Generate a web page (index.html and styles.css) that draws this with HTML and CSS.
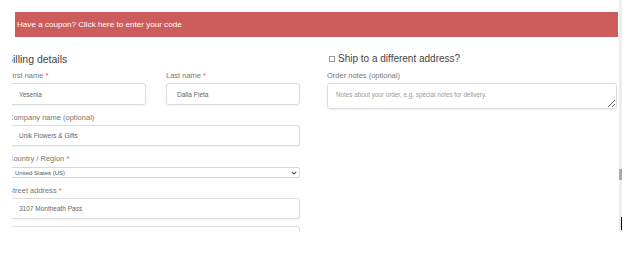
FILE: index.html
```html
<!DOCTYPE html>
<html lang="en">
<head>
    <meta charset="UTF-8">
    <meta name="viewport" content="width=device-width, initial-scale=1.0">
    <title>Checkout</title>
    <link rel="stylesheet" href="styles.css">
</head>
<body>
    <div class="frame">
        <div class="viewport">
            <div class="coupon">Have a coupon? <a href="#">Click here to enter your code</a></div>
            <form class="checkout">
                <div class="billing">
                    <h3>Billing details</h3>
                    <div class="row-2">
                        <p class="field">
                            <label for="first">First name <abbr>*</abbr></label>
                            <input type="text" id="first" value="Yesenia" class="tall">
                        </p>
                        <p class="field">
                            <label for="last">Last name <abbr>*</abbr></label>
                            <input type="text" id="last" value="Dalla Pieta" class="tall">
                        </p>
                    </div>
                    <p class="field">
                        <label for="company">Company name (optional)</label>
                        <input type="text" id="company" value="Unik Flowers &amp; Gifts">
                    </p>
                    <p class="field">
                        <label for="country">Country / Region <abbr>*</abbr></label>
                        <span class="select-wrap">
                            <select id="country">
                                <option>United States (US)</option>
                            </select>
                            <svg class="chevron" width="6" height="4" viewBox="0 0 6 4"><path d="M0.8 0.8 L3 3 L5.2 0.8" fill="none" stroke="#555" stroke-width="1.1"/></svg>
                        </span>
                    </p>
                    <p class="field">
                        <label for="street">Street address <abbr>*</abbr></label>
                        <input type="text" id="street" value="3107 Montheath Pass">
                    </p>
                    <p class="field no-label">
                        <input type="text" id="street2" value="">
                    </p>
                </div>
                <div class="extra">
                    <h3 class="ship"><span class="box"></span>Ship to a different address?</h3>
                    <p class="field">
                        <label for="notes">Order notes (optional)</label>
                        <textarea id="notes" placeholder="Notes about your order, e.g. special notes for delivery."></textarea>
                    </p>
                </div>
            </form>
        </div>
        <div class="scrollbar">
            <span class="thumb"></span>
            <span class="caret"></span>
        </div>
    </div>
</body>
</html>
```

FILE: styles.css
```css
* {
    margin: 0;
    padding: 0;
    box-sizing: border-box;
    font-family: "Liberation Sans", Arial, sans-serif;
}
body {
    background: #fff;
}
.frame {
    display: flex;
    height: 232px;
    padding-left: 12px;
}
.viewport {
    width: 607px;
    height: 232px;
    overflow: hidden;
}
.coupon {
    margin: 12px 1px 0 3px;
    height: 25px;
    padding-left: 2px;
    background: #cd5c5c;
    color: #fff;
    font-size: 8.1px;
    line-height: 25px;
}
.coupon a {
    color: #fff;
    text-decoration: none;
}
.checkout {
    display: grid;
    grid-template-columns: 292px 290px;
    column-gap: 27px;
    margin-left: -4px;
}
h3 {
    font-size: 10.5px;
    font-weight: normal;
    color: #444;
    line-height: 14px;
    margin-top: 15px;
    margin-bottom: 5px;
}
.billing h3 {
    margin-left: -2px;
}
.row-2 {
    display: grid;
    grid-template-columns: 138px 134px;
    column-gap: 20px;
}
.field {
    display: flex;
    flex-direction: column;
    margin-bottom: 8px;
}
.field label {
    font-size: 7.5px;
    line-height: 10px;
    color: #777;
    margin-bottom: 2px;
}
.field abbr {
    color: #e25555;
    text-decoration: none;
}
.field input {
    height: 21px;
    border: 1px solid #dcdcdc;
    border-radius: 3px;
    box-shadow: 0 1px 2px rgba(0, 0, 0, 0.07);
    padding: 0 10px;
    font-size: 6.5px;
    color: #666;
    outline: none;
}
.field input.tall {
    height: 22px;
}
.no-label {
    margin-top: -1px;
}
.select-wrap {
    position: relative;
    display: block;
    margin-top: 1px;
}
.select-wrap select {
    display: block;
    width: 100%;
    height: 11px;
    appearance: none;
    border: 1px solid #d6d6d6;
    border-radius: 2px;
    background: #fff;
    font-size: 6px;
    color: #555;
    padding: 0 0 0 6px;
    outline: none;
}
.chevron {
    position: absolute;
    right: 3px;
    top: 4px;
}
.ship {
    display: flex;
    align-items: center;
    font-size: 10px;
}
.box {
    width: 6px;
    height: 6px;
    border: 1px solid #999;
    margin-left: 2px;
    margin-right: 3px;
}
.field textarea {
    height: 26px;
    border: 1px solid #dcdcdc;
    border-radius: 3px;
    box-shadow: 0 1px 2px rgba(0, 0, 0, 0.07);
    padding: 7px 8px;
    font-size: 6.3px;
    color: #666;
    outline: none;
}
.field textarea::placeholder {
    color: #999;
}
.scrollbar {
    position: relative;
    width: 3px;
    height: 232px;
    background: #eeeeee;
}
.thumb {
    position: absolute;
    left: 0;
    top: 169px;
    width: 3px;
    height: 11px;
    background: #aaa;
}
.caret {
    position: absolute;
    left: 2px;
    top: 217px;
    width: 1px;
    height: 13px;
    background: #000;
}
```
